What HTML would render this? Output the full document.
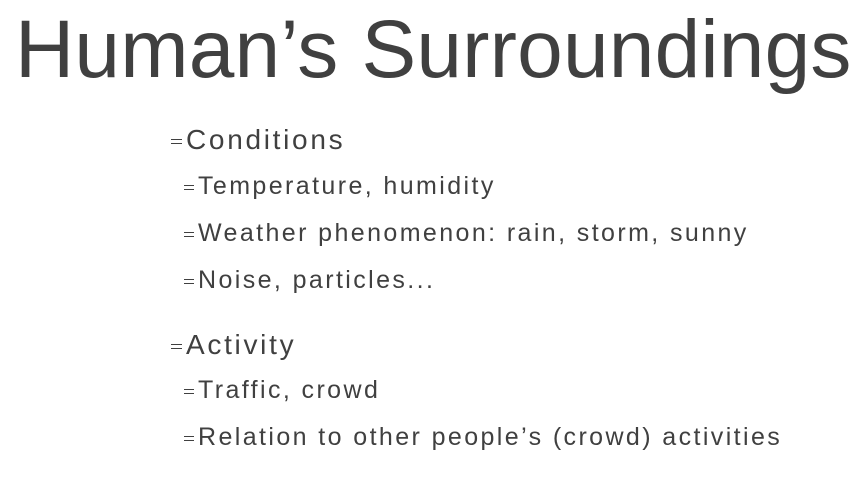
<html><head><style>
body{margin:0;width:864px;height:490px;background:#fff;position:relative;overflow:hidden;font-family:"Liberation Sans",sans-serif;color:#404040}
div{position:absolute;white-space:nowrap;line-height:1}
.t{left:15px;top:9px;font-size:82px;letter-spacing:0.2px}
.a{left:170px;font-size:28px;letter-spacing:2.7px}
.b{left:183px;font-size:25px;letter-spacing:2.4px}
.bul{display:inline-block;position:relative;width:13px;height:10px;margin-right:3px;vertical-align:0.05em}
.bul:before{content:"";position:absolute;left:1px;right:1px;top:1px;height:1.5px;background:#404040}
.bul:after{content:"";position:absolute;left:1px;right:1px;top:5px;height:1.5px;background:#404040}
.b .bul{width:12px;height:9px;margin-right:3px}
</style></head><body>
<div class="t">Human’s Surroundings</div>
<div class="a" style="top:126px"><span class="bul"></span>Conditions</div>
<div class="b" style="top:174px"><span class="bul"></span>Temperature, humidity</div>
<div class="b" style="top:221px"><span class="bul"></span>Weather phenomenon: rain, storm, sunny</div>
<div class="b" style="top:268px"><span class="bul"></span>Noise, particles...</div>
<div class="a" style="top:331px"><span class="bul"></span>Activity</div>
<div class="b" style="top:378px"><span class="bul"></span>Traffic, crowd</div>
<div class="b" style="top:425px"><span class="bul"></span>Relation to other people’s (crowd) activities</div>
</body></html>
